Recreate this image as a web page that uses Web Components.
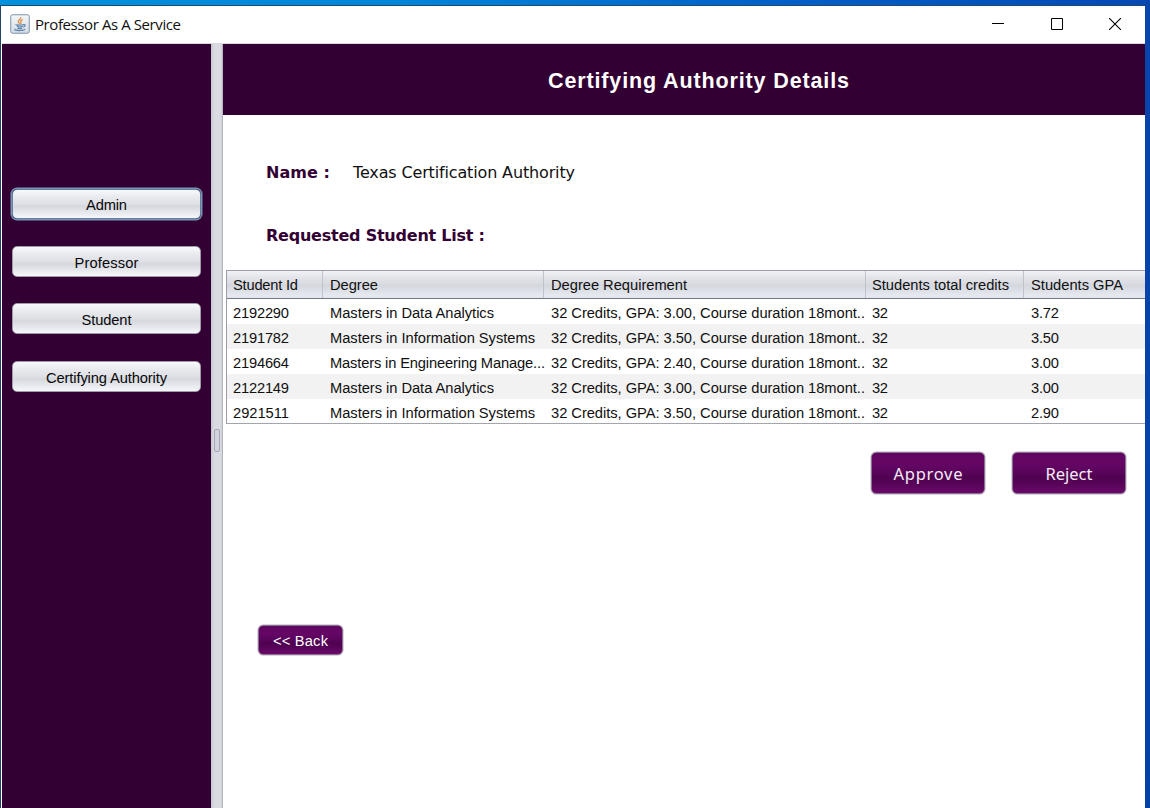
<!DOCTYPE html>
<html lang="en"><head><meta charset="utf-8"><title>Professor As A Service</title>
<style>html,body{margin:0;height:100%;overflow:hidden}body{font-family:"Liberation Sans",Arial,sans-serif;color:#101010}</style></head>
<body>
<pa-desktop>
 <pa-window>
  <pa-titlebar slot="title"></pa-titlebar>
  <pa-sidebar slot="side">
   <pa-button focused fit="41">Admin</pa-button>
   <pa-button low fit="64">Professor</pa-button>
   <pa-button fit="50">Student</pa-button>
   <pa-button low fit="121">Certifying Authority</pa-button>
  </pa-sidebar>
  <pa-details></pa-details>
 </pa-window>
</pa-desktop>
<script>
const define = (name, html, setup) => customElements.define(name, class extends HTMLElement {
  connectedCallback() {
    if (this.shadowRoot) return;
    const t = document.createElement('template');
    t.innerHTML = '<style>*{box-sizing:border-box}:host{box-sizing:border-box;display:block}</style>' + html;
    this.attachShadow({mode: 'open'}).append(t.content.cloneNode(true));
    if (setup) setup(this, this.shadowRoot);
  }
});

/* Adjusts the tracking of a one-line span to a given advance width. */
const fit = (span, text, w) => {
  if (!w) return;
  const d = (w - span.getBoundingClientRect().width) / (text.length - 1);
  span.style.letterSpacing = d.toFixed(3) + 'px';
  span.style.marginRight = (-d).toFixed(3) + 'px';
};

define('pa-text', `<style>:host{display:inline-block;white-space:pre;flex:none}span{display:inline-block}</style><span></span>`, (el, root) => {
  const s = root.querySelector('span');
  s.textContent = el.getAttribute('text');
  fit(s, s.textContent, parseFloat(el.getAttribute('w')));
});

define('pa-desktop', `<style>:host{height:808px;width:1150px;padding:5px 5px 0 0;overflow:hidden;background:linear-gradient(#0845ac,#0440a8) right/5px 100% no-repeat,linear-gradient(90deg,#0491dc,#0385d8 35%,#0262c8 65%,#0648b2)}</style><slot></slot>`);

define('pa-window', `<style>
:host{height:803px;display:flex;flex-direction:column;background:#fff;border-top:1px solid #1c4a70;border-left:1px solid #1f4668;padding-left:1px}
.body{flex:1;display:flex;min-height:0}
.split{width:12px;background:linear-gradient(90deg,#c6c7cf,#d9dae2 30%,#dadbe3 80%,#d0d1d9);border-right:1px solid #b3b4bd;display:flex;align-items:flex-start;padding:385px 0 0 3px}
.grip{width:6px;height:23px;border:1px solid #a4a7b2;border-radius:2px;background:#d3d5de}
.main{flex:1;min-width:0;overflow:hidden}</style>
<slot name="title"></slot><div class="body"><slot name="side"></slot><div class="split"><div class="grip"></div></div><div class="main"><slot></slot></div></div>`);

define('pa-titlebar', `<style>
:host{height:38px;flex:none;display:flex;align-items:center;background:#fff;border-bottom:1px solid #ddd8df;padding:0 24px 2px 8px;font:15px/20px "Open Sans","Noto Sans",sans-serif;color:#111}
svg{display:block;flex:none}pa-text{margin:0 0 0 5px}.gap{flex:1}.ctl{display:flex;gap:47px}.ctl svg:last-child{margin-left:-1px}</style>
<svg width="20" height="20" viewBox="0 0 20 20"><defs><linearGradient id="g" x2="0" y2="1"><stop stop-color="#f5f7f9"/><stop offset="1" stop-color="#d2dce5"/></linearGradient></defs>
<rect x=".75" y=".75" width="18.5" height="18.5" rx="1.8" fill="url(#g)" stroke="#7e93a9"/>
<path d="M10.8 3.2c.7 1.9-3.6 2.8-2.4 4.7.4.8 1 1.2 1.2 1.9M12.8 5.7c-2 .8-2.7 1.7-1.9 2.6.5.7.1 1.1-.4 1.7" fill="none" stroke="#dd8b45" stroke-width="1.3"/>
<path d="M6 10.4c-.6.9 6.500.9 7.700 0M7 12.300c1.500.8 4.200.7 5.700 0M7.500 14.100c1.400.6 3.400.6 4.600 0M13.400 10.600c2.600-.5 2.200 2-.3 2.500M5.400 15c-2.200 1 2 1.700 5 1.500 2.800-.1 5-.8 4-1.500" fill="none" stroke="#5d80a8" stroke-width="1.2"/></svg>
<pa-text text="Professor As A Service" w="146"></pa-text><div class="gap"></div>
<div class="ctl"><svg width="12" height="12"><path d="M0 5.5h12" stroke="#000"/></svg><svg width="12" height="12"><path d="M.5.5h11v11H.5z" fill="none" stroke="#000"/></svg><svg width="12" height="12"><path d="M0 0l12 12M12 0L0 12" stroke="#000" stroke-width="1.1"/></svg></div>`);

define('pa-sidebar', `<style>:host{width:209px;flex:none;background:#330033;display:flex;flex-direction:column;gap:26.5px;padding:144px 10px 0 10px}</style><slot></slot>`);

define('pa-button', `<style>
:host{height:31px;flex:none;display:flex;align-items:center;justify-content:center;white-space:pre;border-radius:5px;border:1px solid #a19ba9;background:linear-gradient(#f8f9fb,#e9eaee 25%,#dee0e5 50%,#d5d8de 58%,#e6e8ed 80%,#f5f7fb);font-size:14.7px;line-height:18px;color:#080808;padding-top:2px}
span{display:inline-block}
:host([low]){padding-top:3px}
:host([focused]){margin:1px 0 0;box-shadow:0 0 0 1.5px #7894b4;border-color:#65819f;height:30px}
:host([dark]){color:#f6eaf6;border:1px solid #8a7090;box-shadow:0 0 0 .5px #b8acbb;background:linear-gradient(#5e085f,#660666 25%,#58055a 50%,#4e024f 60%,#560457 75%,#6a096a)}
:host([big]){width:114px;height:42px;font:16.5px/22px "Noto Sans",sans-serif}
:host([back]){width:85px;height:30px;font-size:14.7px;color:#fff;padding-top:1px}
</style><span><slot></slot></span>`, (el, root) => fit(root.querySelector('span'), el.textContent, parseFloat(el.getAttribute('fit'))));

define('pa-table', `<style>
:host{height:154px;border:1px solid #9a9ca6;border-right:0;border-bottom:1.5px solid #a3a5ae;overflow:hidden;font-size:14.7px;line-height:18px;background:#fff}
.row{display:grid;grid-template-columns:96px 221px 322px 158px 1fr;height:25px}
.row:nth-child(odd){background:#f2f2f2}
.row>div{padding:5px 0 0 7px;white-space:nowrap;min-width:0}
.row>div:first-child,.row>div:nth-child(4){padding-left:6px}
.head{height:28px!important;border-bottom:1px solid #777984;background:linear-gradient(#f2f3f6,#e2e4e9 25%,#d9dbe1 48%,#d3d6dd 52%,#e6e9ef 92%,#e0e3e9)!important}
.head>div{border-right:1px solid #bfc3cc}.head>div:last-child{border:0}
</style>`, (el, root) => {
  const m = {
    'Data': ['Masters in Data Analytics', 164, '3.00'],
    'Info': ['Masters in Information Systems', 205, '3.50'],
    'Eng': ['Masters in Engineering Manage...', 215, '2.40']
  };
  const add = (cells, cls) => {
    const r = document.createElement('div');
    r.className = cls;
    for (const [text, w] of cells) {
      const c = document.createElement('div'), t = document.createElement('pa-text');
      t.setAttribute('text', text); t.setAttribute('w', w);
      c.append(t); r.append(c);
    }
    root.append(r);
  };
  add([['Student Id', 65], ['Degree', 48], ['Degree Requirement', 136], ['Students total credits', 137], ['Students GPA', 92]], 'row head');
  for (const [id, k, gpa] of [['2192290', 'Data', '3.72'], ['2191782', 'Info', '3.50'], ['2194664', 'Eng', '3.00'], ['2122149', 'Data', '3.00'], ['2921511', 'Info', '2.90']])
    add([[id, 56], [m[k][0], m[k][1]], ['32 Credits, GPA: ' + m[k][2] + ', Course duration 18mont..', 314], ['32', 16], [gpa, 28]], 'row');
});

define('pa-details', `<style>
:host{height:100%;background:#fff}
header{height:71px;background:#330033;color:#fff;display:flex;justify-content:center;align-items:center;font:bold 21.5px/26px "Liberation Sans",sans-serif;padding:2px 0 0 29px}
.line{display:flex;align-items:center;height:24px;padding-left:43px;font:16px/24px "DejaVu Sans",sans-serif}
.line b{color:#330033;width:87px;font:bold 16px/24px "DejaVu Sans",sans-serif}
.name{margin-top:46px}.list{margin-top:39px}
pa-table{margin:22px 0 0 3px}
.actions{display:flex;justify-content:flex-end;gap:27px;margin-top:28px;padding-right:19px}
.foot{padding:131px 0 0 35px}
</style>
<header><pa-text text="Certifying Authority Details" w="301"></pa-text></header>
<div class="line name"><b><pa-text text="Name :" w="64"></pa-text></b><pa-text text="Texas Certification Authority" w="222"></pa-text></div>
<div class="line list"><b><pa-text text="Requested Student List :" w="219"></pa-text></b></div>
<pa-table></pa-table>
<div class="actions"><pa-button dark big fit="69">Approve</pa-button><pa-button dark big fit="47">Reject</pa-button></div>
<div class="foot"><pa-button dark back fit="55">&lt;&lt; Back</pa-button></div>`);
</script>
</body></html>
